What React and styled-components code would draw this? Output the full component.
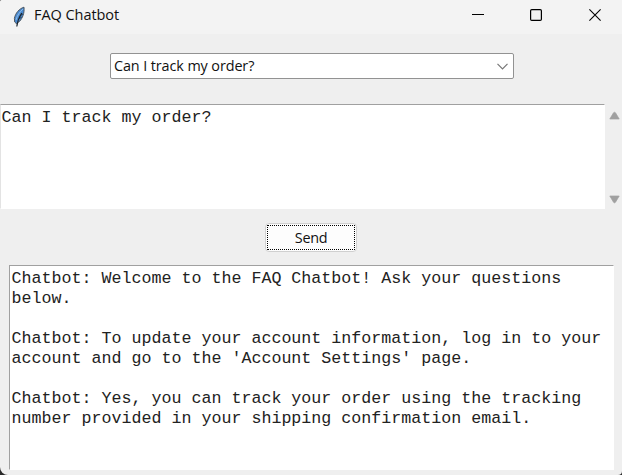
import React from "react";
import styled, { createGlobalStyle } from "styled-components";

const GlobalStyle = createGlobalStyle`
  * { box-sizing: border-box; }
  html, body { margin: 0; background: #2a2a2a; overflow: hidden; }
`;

const Window = styled.div`
  width: 622px;
  height: 475px;
  display: flex;
  flex-direction: column;
  background: #efefef;
  color: #111;
  font-family: "Open Sans", "Noto Sans", sans-serif;
  overflow: hidden;
  border-radius: 2px 0 4px 8px;
`;

const TitleBar = styled.header`
  height: 34px;
  flex: none;
  display: flex;
  align-items: center;
  background: #f3f3f3;
  padding-left: 12px;
`;

const Title = styled.h1`
  margin: 0 auto 0 8px;
  font-size: 14.5px;
  line-height: 20px;
  padding-bottom: 4px;
  font-weight: 400;
  letter-spacing: -0.05px;
  white-space: nowrap;
`;

const Controls = styled.div`
  display: flex;
  height: 30px;
  margin: 0 -2px 4px 0;
`;

const ControlButton = styled.button`
  width: 58.5px;
  padding: 0;
  border: 0;
  background: transparent;
  display: grid;
  place-items: center;
  svg { display: block; }
`;

const Combo = styled.div`
  flex: none;
  width: 404px;
  height: 26px;
  margin: 19px 0 0 110px;
  padding: 0 5px 0 3px;
  display: flex;
  align-items: center;
  justify-content: space-between;
  background: #fff;
  border: 1px solid #929292;
  border-radius: 2px;
  font-size: 14.4px;
  line-height: 20px;
  letter-spacing: -0.1px;
  white-space: nowrap;
`;

const InputRow = styled.div`
  flex: none;
  display: flex;
  height: 105px;
  margin-top: 25px;
`;

const MonoPane = styled.div`
  background: #fff;
  border-style: solid;
  border-color: #a0a0a0 #fff #fff ${(p) => p.$left};
  border-width: 1px;
  width: 605px;
  height: ${(p) => p.$height}px;
  padding: ${(p) => p.$pad};
  font-family: "Liberation Mono", "Courier New", monospace;
  font-size: 16.67px;
  line-height: 20px;
  color: #222;
  white-space: pre;
  overflow: hidden;
`;

const ScrollBar = styled.div`
  flex: 1;
  display: flex;
  flex-direction: column;
  justify-content: space-between;
  align-items: flex-end;
  padding: 7px 2px 5px 0;
  svg { display: block; }
`;

const SendButton = styled.button`
  flex: none;
  width: 92px;
  height: 29px;
  margin: 14px 0 0 265px;
  padding: 1px;
  background: #fdfdfd;
  border: 1px solid #d0d0d0;
  border-radius: 4px;
  color: #111;
  font: 14.4px/24px "Open Sans", "Noto Sans", sans-serif;
  letter-spacing: -0.3px;
`;

const FocusRing = styled.span`
  display: block;
  height: 25px;
  border: 1px dotted #000;
`;

const Output = styled.section`
  flex: none;
  padding: 13px 0 0 9px;
`;

const transcript = [
  "Chatbot: Welcome to the FAQ Chatbot! Ask your questions",
  "below.",
  "",
  "Chatbot: To update your account information, log in to your",
  "account and go to the 'Account Settings' page.",
  "",
  "Chatbot: Yes, you can track your order using the tracking",
  "number provided in your shipping confirmation email.",
].join("\n");

function Feather() {
  return (
    <svg width="14" height="24" viewBox="0 0 14 24">
      <path d="M12 2.2C7.4 3.4 3.2 8.4 2.4 13.4l.3 3.6 1.6 1.6 3.4-2.4C10.4 13 12.6 8.6 12 2.2Z" fill="#4a8ad0" stroke="#4d5761" strokeWidth="1" />
      <path d="M11 4C8 6.6 5 10.6 4 15" fill="none" stroke="#8dbbe8" strokeWidth="1" />
      <path d="M9.8 8C7.4 11.6 5.6 15 4.8 21.5" fill="none" stroke="#1c2630" strokeWidth="1.2" />
      <path d="m9.6 12.3-2.2 1.2M10.9 9 9 10.2" stroke="#1c2630" strokeWidth=".8" />
    </svg>
  );
}

function Arrow({ down }) {
  return (
    <svg width="11" height="9" viewBox="0 0 11 9">
      <path
        d={down ? "M.8 1h9.4L6.5 7.2q-1 1.2-2 0Z" : "M.8 8h9.4L6.5 1.8q-1-1.2-2 0Z"}
        fill="#a0a0a0"
        stroke="#a0a0a0"
        strokeWidth=".7"
        strokeLinejoin="round"
      />
    </svg>
  );
}

export default function App() {
  return (
    <>
      <GlobalStyle />
      <Window>
        <TitleBar>
          <Feather />
          <Title>FAQ Chatbot</Title>
          <Controls>
            <ControlButton aria-label="Minimize">
              <svg width="12" height="12"><path d="M0 5.5h12" stroke="#000" /></svg>
            </ControlButton>
            <ControlButton aria-label="Maximize">
              <svg width="12" height="12"><rect x=".6" y=".6" width="10.8" height="10.8" rx="1.2" fill="none" stroke="#000" strokeWidth="1.2" /></svg>
            </ControlButton>
            <ControlButton aria-label="Close">
              <svg width="12" height="12"><path d="m.4.4 11.2 11.2M11.6.4.4 11.6" stroke="#000" strokeWidth="1.1" /></svg>
            </ControlButton>
          </Controls>
        </TitleBar>
        <Combo>
          <span>Can I track my order?</span>
          <svg width="11" height="7"><path d="m.5.8 5 5 5-5" fill="none" stroke="#777" strokeWidth="1.2" /></svg>
        </Combo>
        <InputRow>
          <MonoPane $left="#e3e3e3" $height={105} $pad="3px 0 0 0.5px">Can I track my order?</MonoPane>
          <ScrollBar>
            <Arrow />
            <Arrow down />
          </ScrollBar>
        </InputRow>
        <SendButton><FocusRing>Send</FocusRing></SendButton>
        <Output>
          <MonoPane $left="#a0a0a0" $height={205} $pad="3px 0 0 1.5px">{transcript}</MonoPane>
        </Output>
      </Window>
    </>
  );
}
